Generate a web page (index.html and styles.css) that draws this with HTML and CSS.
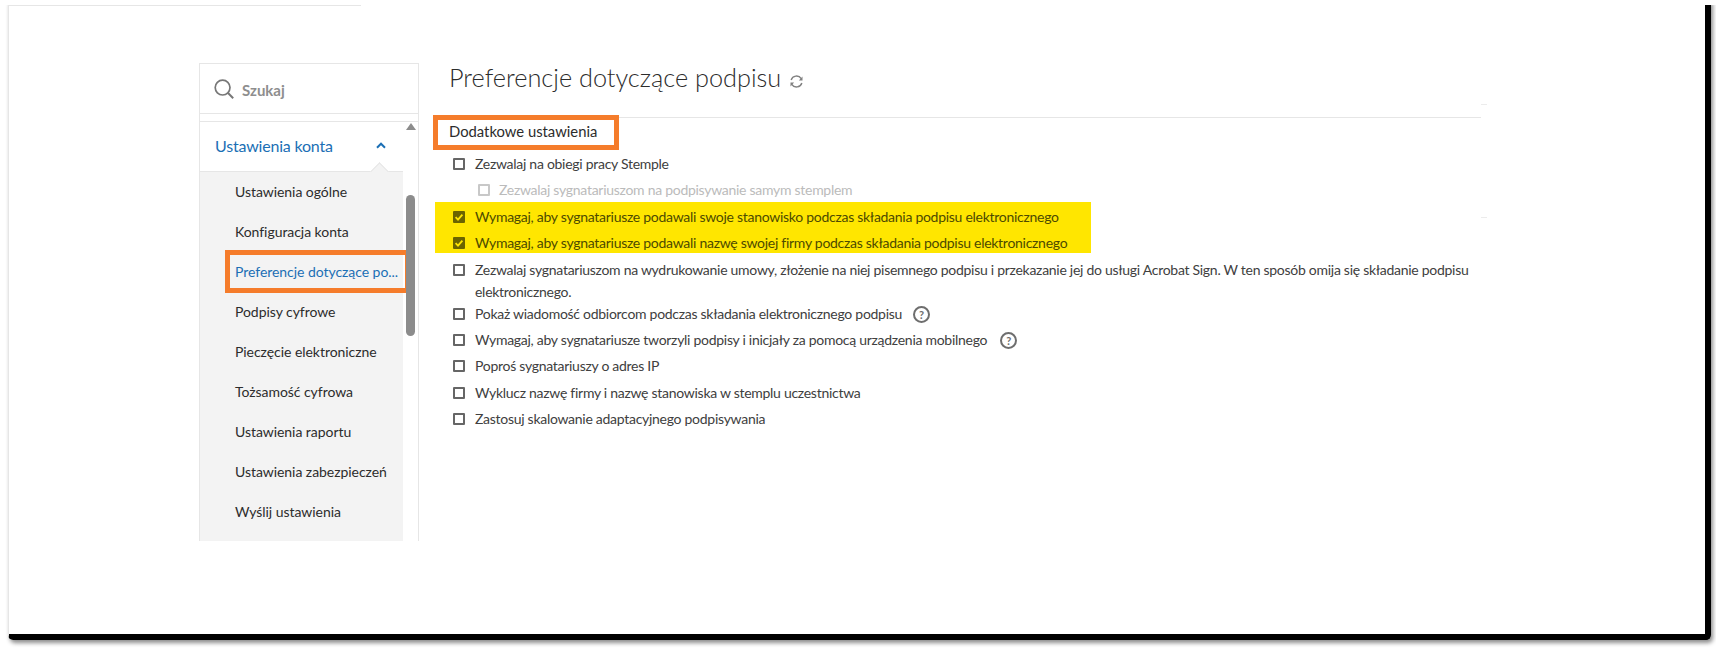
FILE: index.html
```html
<!DOCTYPE html>
<html lang="pl">
<head>
<meta charset="utf-8">
<title>Preferencje dotyczące podpisu</title>
<link rel="stylesheet" href="styles.css">
</head>
<body>
<div class="frame">
  <div class="layout">
    <aside class="sidebar">
      <div class="search">
        <svg class="search-icon" viewBox="0 0 20 20" width="20" height="20"><circle cx="8.6" cy="8.6" r="7.4" fill="none" stroke="#777" stroke-width="1.7"/><path d="M13.8 13.8 19.2 19.2" stroke="#777" stroke-width="2" fill="none"/></svg>
        <span>Szukaj</span>
      </div>
      <div class="nav">
        <div class="nav-main">
          <div class="nav-head">
            <span>Ustawienia konta</span>
            <svg class="chev" viewBox="0 0 10 7" width="10" height="7"><path d="M1 5.7 5 1.7l4 4" fill="none" stroke="#1b6fb5" stroke-width="2"/></svg>
          </div>
          <ul class="nav-list">
            <li>Ustawienia ogólne</li>
            <li>Konfiguracja konta</li>
            <li class="active">Preferencje dotyczące po...</li>
            <li>Podpisy cyfrowe</li>
            <li>Pieczęcie elektroniczne</li>
            <li>Tożsamość cyfrowa</li>
            <li>Ustawienia raportu</li>
            <li>Ustawienia zabezpieczeń</li>
            <li>Wyślij ustawienia</li>
          </ul>
        </div>
        <div class="scroll"><i class="scroll-up"></i><i class="scroll-thumb"></i></div>
      </div>
    </aside>
    <main class="content">
      <h1>Preferencje dotyczące podpisu
        <svg class="refresh" viewBox="0 0 14 14" width="15" height="15"><path d="M2 5.6A5.2 5.2 0 0 1 11.4 4.4M12 8.4A5.2 5.2 0 0 1 2.6 9.6" fill="none" stroke="#808080" stroke-width="1.3"/><path d="M12.6 2.4v3.6H9.2zM1.4 11.6V8h3.4z" fill="#808080"/></svg>
      </h1>
      <div class="section">
        <h2 class="boxed">Dodatkowe ustawienia</h2>
        <div class="row"><i class="cb"></i><span>Zezwalaj na obiegi pracy Stemple</span></div>
        <div class="row sub"><i class="cb"></i><span>Zezwalaj sygnatariuszom na podpisywanie samym stemplem</span></div>
        <div class="mark">
          <div class="row"><i class="cb on"><svg viewBox="0 0 12 12" width="12" height="12"><path d="M2.6 6.2 5 8.6l4.4-5" fill="none" stroke="#ffe600" stroke-width="1.8"/></svg></i><span>Wymagaj, aby sygnatariusze podawali swoje stanowisko podczas składania podpisu elektronicznego</span></div>
          <div class="row"><i class="cb on"><svg viewBox="0 0 12 12" width="12" height="12"><path d="M2.6 6.2 5 8.6l4.4-5" fill="none" stroke="#ffe600" stroke-width="1.8"/></svg></i><span>Wymagaj, aby sygnatariusze podawali nazwę swojej firmy podczas składania podpisu elektronicznego</span></div>
        </div>
        <div class="row tight"><i class="cb"></i><span>Zezwalaj sygnatariuszom na wydrukowanie umowy, złożenie na niej pisemnego podpisu i przekazanie jej do usługi Acrobat Sign. W ten sposób omija się składanie podpisu elektronicznego.</span></div>
        <div class="row"><i class="cb"></i><span>Pokaż wiadomość odbiorcom podczas składania elektronicznego podpisu<i class="help">?</i></span></div>
        <div class="row"><i class="cb"></i><span>Wymagaj, aby sygnatariusze tworzyli podpisy i inicjały za pomocą urządzenia mobilnego<i class="help help-far">?</i></span></div>
        <div class="row"><i class="cb"></i><span>Poproś sygnatariuszy o adres IP</span></div>
        <div class="row"><i class="cb"></i><span>Wyklucz nazwę firmy i nazwę stanowiska w stemplu uczestnictwa</span></div>
        <div class="row"><i class="cb"></i><span>Zastosuj skalowanie adaptacyjnego podpisywania</span></div>
      </div>
    </main>
  </div>
</div>
</body>
</html>
```
FILE: styles.css
```css
* { box-sizing: border-box; }
html, body { margin: 0; height: 648px; overflow: hidden; background: #fff; }
body { font-family: Lato, "Noto Sans", sans-serif; color: #2c2c2c; padding: 0 5px 8px 8px; }
.frame {
  position: relative;
  height: 640px;
  padding: 63px 0 0 190px;
  border-left: 1px solid #e6e6e6;
  border-right: 6px solid #000;
  border-bottom: 6px solid #000;
  border-radius: 0 0 5px 5px;
  box-shadow: 2px 3px 4px rgba(0,0,0,.45);
  clip-path: inset(5px -8px -8px -8px);
}
.frame::before {
  content: "";
  position: absolute;
  left: 0;
  top: 5px;
  width: 352px;
  height: 1px;
  background: #e6e6e6;
}
.layout { display: flex; align-items: flex-start; }
.sidebar {
  width: 220px;
  height: 478px;
  border: 1px solid #e6e6e6;
  border-bottom: 0;
  flex: none;
}
.search {
  height: 50px;
  display: flex;
  align-items: center;
  padding: 0 0 0 14px;
  gap: 8px;
  border-bottom: 1px solid #e6e6e6;
  color: #8e8e8e;
  font-size: 15px;
  font-weight: 700;
}
.search span { padding-top: 2px; }
.nav { display: flex; margin-top: 7px; border-top: 1px solid #e6e6e6; height: 420px; }
.nav-main { width: 203px; flex: none; }
.nav-head {
  position: relative;
  height: 50px;
  display: flex;
  align-items: center;
  justify-content: space-between;
  padding: 0 17px 2px 15px;
  color: #1b6fb5;
  font-size: 16px;
  letter-spacing: -0.2px;
  border-bottom: 1px solid #e6e6e6;
}
.nav-head::after {
  content: "";
  position: absolute;
  right: 17px;
  bottom: -7px;
  width: 12px;
  height: 12px;
  background: #f3f3f3;
  border-left: 1px solid #e6e6e6;
  border-top: 1px solid #e6e6e6;
  transform: rotate(45deg);
}
.nav-list {
  position: relative;
  list-style: none;
  margin: 0;
  padding: 0 0 0 35px;
  height: 369px;
  background: #f3f3f3;
  font-size: 14px;
  letter-spacing: -0.05px;
}
.nav-list li { height: 40px; line-height: 40px; white-space: nowrap; color: #2c2c2c; }
.nav-list li.active { color: #1b6fb5; position: relative; }
.nav-list li.active::after {
  content: "";
  position: absolute;
  left: -10px;
  top: -2px;
  width: 175px;
  height: 33px;
  border: 5px solid #f57c2b;
}
.scroll { position: relative; width: 16px; }
.scroll-up {
  position: absolute;
  left: 3px;
  top: 1px;
  border: 5px solid transparent;
  border-top: 0;
  border-bottom: 7px solid #8c8c8c;
}
.scroll-thumb {
  position: absolute;
  left: 3px;
  top: 73px;
  width: 9px;
  height: 141px;
  border-radius: 5px;
  background: #8c8c8c;
}
.content { flex: none; width: 1044px; margin-left: 18px; position: relative; }
.content::before, .content::after {
  content: "";
  position: absolute;
  left: 1044px;
  width: 6px;
  height: 1px;
  background: #ececec;
}
.content::before { top: 41px; }
.content::after { top: 154px; }
h1 {
  margin: 0;
  height: 55px;
  padding: 0 0 0 12px;
  font-size: 25.3px;
  font-weight: 300;
  line-height: 28px;
  color: #2c2c2c;
  border-bottom: 1px solid #e6e6e6;
}
.refresh { margin-left: 1px; vertical-align: -2px; }
h2 {
  margin: 0;
  font-size: 14.8px;
  font-weight: 400;
  color: #2c2c2c;
}
.boxed {
  position: relative;
  height: 35px;
  width: 186px;
  margin: -3px 0 3px -4px;
  padding: 1px 0 0 11px;
  border: 5px solid #f57c2b;
  background: #fff;
  line-height: 20px;
}
.row {
  display: flex;
  align-items: flex-start;
  padding: 0 0 4.2px 16px;
  font-size: 14px;
  line-height: 22px;
  letter-spacing: -0.28px;
  color: #404040;
}
.row.tight { padding-bottom: 0; }
.row.sub { padding-left: 41px; color: #bbb; }
.row.sub .cb { margin-right: 9px; }
.cb {
  flex: none;
  width: 12px;
  height: 12px;
  margin: 5px 10px 0 0;
  border: 2px solid #666;
  border-radius: 1px;
  position: relative;
}
.sub .cb { border-color: #c8c8c8; }
.cb.on { background: #6b6400; border: 0; }
.cb svg { display: block; }
.mark {
  width: 656px;
  height: 51px;
  background: #ffe600;
  margin: -3.4px 0 6px -2px;
  padding: 4px 0 0 2px;
}
.mark .row { color: #4d4a00; }
.help {
  display: inline-block;
  width: 17px;
  height: 17px;
  margin: -4px 0 -4px 11px;
  border: 2px solid #6e6e6e;
  border-radius: 50%;
  font: 700 11px/13px Lato, sans-serif;
  letter-spacing: 0;
  color: #6e6e6e;
  text-align: center;
  vertical-align: 0;
}
.help-far { margin-left: 13px; }
```
